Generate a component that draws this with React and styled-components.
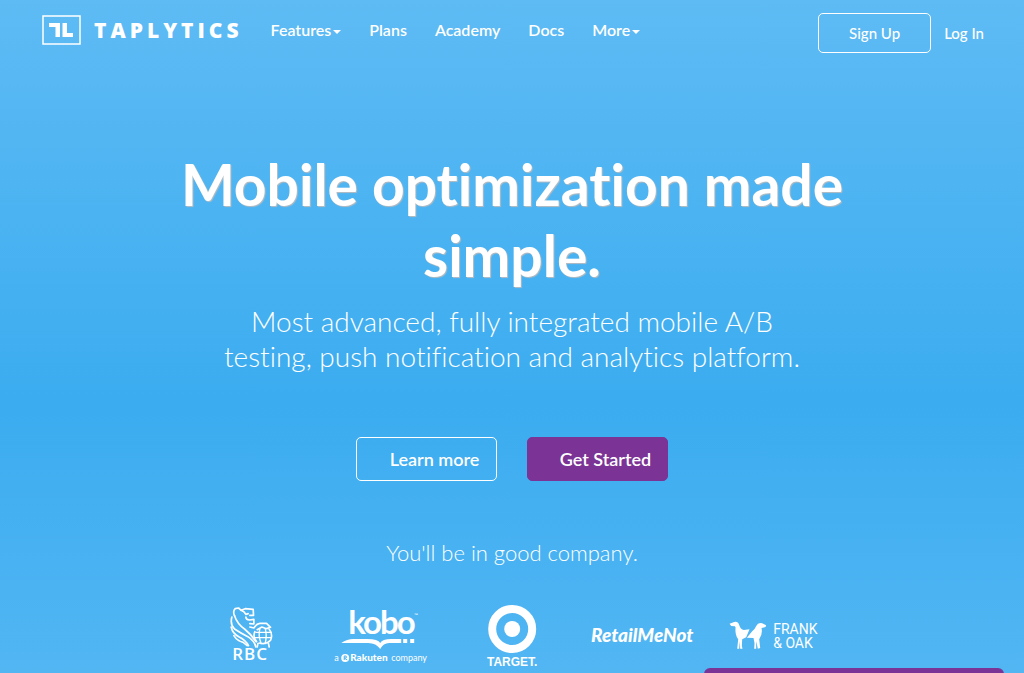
import React from "react";
import styled, { createGlobalStyle } from "styled-components";

const GlobalStyle = createGlobalStyle`
  * { box-sizing: border-box; }
  body {
    margin: 0;
    color: #fff;
    font-family: Lato, "Open Sans", sans-serif;
    font-variant-ligatures: none;
    overflow-x: hidden;
  }
`;

const Page = styled.div`
  min-height: 100vh;
  background: linear-gradient(#5ebbf4 0%, #3bacf0 60%, #52b6f3 100%);
`;

const Header = styled.header`
  display: flex;
  align-items: center;
  height: 60px;
  padding: 0 40px 0 42px;
`;

const Brand = styled.a`
  display: flex;
  align-items: center;
  gap: 13px;
  margin-right: 28px;
  color: #fff;
  text-decoration: none;
`;

const BrandMark = styled.svg`
  width: 39px;
  height: 30px;
`;

const BrandName = styled.span`
  font-family: "Open Sans", sans-serif;
  font-size: 21px;
  font-weight: 800;
  line-height: 30px;
  letter-spacing: 4px;
`;

const Nav = styled.nav`
  display: flex;
  gap: 28px;
`;

const NavLink = styled.a`
  display: flex;
  align-items: center;
  gap: 2px;
  color: #fff;
  font-size: 16px;
  font-weight: 600;
  line-height: 20px;
  text-decoration: none;
`;

const Caret = styled.span`
  margin-top: 4px;
  border: 4px solid transparent;
  border-top-color: #fff;
  border-bottom: 0;
`;

const Account = styled.div`
  display: flex;
  align-items: center;
  gap: 13px;
  margin-left: auto;
  padding-top: 6px;
`;

const SignUp = styled.button`
  width: 113px;
  height: 40px;
  padding: 0;
  border: 1px solid #fff;
  border-radius: 5px;
  background: transparent;
  color: #fff;
  font: 500 15px/20px Lato, sans-serif;
`;

const LogIn = styled.a`
  color: #fff;
  font-size: 15px;
  font-weight: 500;
  line-height: 20px;
  text-decoration: none;
`;

const Hero = styled.main`
  display: flex;
  flex-direction: column;
  align-items: center;
  padding: 89px 20px 0;
  text-align: center;
`;

const Title = styled.h1`
  max-width: 720px;
  margin: 0;
  font-size: 57px;
  font-weight: 700;
  line-height: 71px;
  text-shadow: 1px 1px 1px #b8bcc0;
`;

const Lead = styled.p`
  max-width: 600px;
  margin: 13px 0 0;
  font-size: 28px;
  font-weight: 300;
  line-height: 35px;
`;

const Actions = styled.div`
  display: flex;
  gap: 30px;
  margin-top: 63px;
`;

const ActionButton = styled.button`
  width: 141px;
  height: 44px;
  padding: 0 0 0 16px;
  border: 1px solid ${(p) => (p.$primary ? "#7b3495" : "#fff")};
  border-radius: 5px;
  background: ${(p) => (p.$primary ? "#7b3495" : "transparent")};
  color: #fff;
  font: 600 18px/24px Lato, sans-serif;
`;

const Company = styled.p`
  margin: 57px 0 0;
  font-size: 22px;
  font-weight: 300;
  line-height: 30px;
`;

const Logos = styled.div`
  display: grid;
  grid-template-columns: repeat(5, 1fr);
  width: 100%;
  max-width: 652px;
  margin-top: 37px;
`;

const Logo = styled.svg`
  display: block;
  width: 100%;
  height: 66px;
  fill: #fff;
  overflow: visible;
`;

const ChatTab = styled.button`
  position: fixed;
  right: 20px;
  bottom: -35px;
  width: 300px;
  height: 40px;
  border: 0;
  border-radius: 6px 6px 0 0;
  background: #7b3495;
`;

const links = [
  { label: "Features", menu: true },
  { label: "Plans" },
  { label: "Academy" },
  { label: "Docs" },
  { label: "More", menu: true },
];

function RbcLogo() {
  return (
    <Logo viewBox="0 0 130 66" role="img" aria-label="RBC">
      <g
        transform="translate(29 -10) scale(.3333)"
        fill="none"
        stroke="#fff"
        strokeWidth="5"
        strokeLinejoin="round"
        strokeLinecap="round"
      >
        <path d="M58 62 Q52 50 60 41 L70 39 L78 46 L90 41 L114 43 L115 61 L104 61" />
        <path d="M78 46 Q88 50 92 58 L99 56 M92 66 Q92 74 103 75 L116 73 L116 87 L104 86" />
        <path d="M50 66 Q44 88 58 102 Q76 114 98 125 Q118 138 122 156" />
        <path d="M58 62 Q66 86 88 102 Q108 118 122 140" />
        <path d="M48 96 Q52 116 72 126 Q92 136 100 152" />
        <path d="M56 122 Q66 138 84 142 L96 152" />
        <path d="M104 96 L116 99 Q124 86 134 85 L154 85 L166 97 L154 101 L140 96 L126 104" />
        <path d="M119 110 Q112 126 124 140 M162 103 Q174 118 166 136 Q154 150 132 144 M128 146 L126 156 M160 146 L162 156" />
        <path d="M134 102 Q128 120 138 146 M150 101 Q156 120 150 146 M122 112 H168 M120 128 H168" strokeWidth="4" />
      </g>
      <text x="46" y="55" fontFamily="Open Sans" fontSize="17" fontWeight="600" letterSpacing="1">RBC</text>
    </Logo>
  );
}

function KoboLogo() {
  return (
    <Logo viewBox="0 0 130 66" role="img" aria-label="Kobo, a Rakuten company">
      <text x="32" y="29" fontFamily="Lato" fontSize="33" fontWeight="700" letterSpacing="-2">kobo</text>
      <text x="98" y="12" fontFamily="Lato" fontSize="5">™</text>
      <path d="M25 38 Q31 34 37 34 H51 Q62 34 64 38 Q66 34 75 34 H85 V38 H73 Q67 38 64 44 Q60 38 52 38 Z M87 34 H91 V38 H87 Z M94 34 H98 V38 H94 Z" />
      <text x="18" y="56" fontFamily="Lato" fontSize="9">a</text>
      <circle cx="29" cy="53" r="4" />
      <path d="M28 55 V51 H30 V53 H28 L31 55" fill="none" stroke="#4fb5f2" />
      <text x="34" y="56" fontFamily="Lato" fontSize="10" fontWeight="900">Rakuten</text>
      <text x="75" y="56" fontFamily="Lato" fontSize="9">company</text>
    </Logo>
  );
}

function TargetLogo() {
  return (
    <Logo viewBox="0 0 130 66" role="img" aria-label="Target">
      <circle cx="65" cy="24" r="20" fill="none" stroke="#fff" strokeWidth="8" />
      <circle cx="65" cy="24" r="8" />
      <text x="65" y="61" textAnchor="middle" fontFamily="Liberation Sans" fontSize="12" fontWeight="700">TARGET.</text>
    </Logo>
  );
}

function RetailMeNotLogo() {
  return (
    <Logo viewBox="0 0 130 66" role="img" aria-label="RetailMeNot">
      <text x="65" y="37" textAnchor="middle" fontFamily="Lato" fontSize="19" fontWeight="900" fontStyle="italic">RetailMeNot</text>
    </Logo>
  );
}

function FrankOakLogo() {
  return (
    <Logo viewBox="0 0 130 66" role="img" aria-label="Frank & Oak">
      <g transform="translate(-8 -5) scale(.3333)">
        <path d="M88 71 L102 66 Q113 63 117 75 Q121 88 131 90 L148 88 L138 112 L126 118 L125 138 L127 146 L120 146 L119 124 L117 146 L111 146 L114 118 Q104 106 106 82 L104 79 L93 78 Z" />
        <path d="M198 76 L186 70 Q174 66 168 78 Q164 88 156 94 L140 113 L160 114 L163 130 L162 146 L168 146 L168 124 L173 146 L180 144 L177 118 Q188 102 184 84 L196 81 Z" />
      </g>
      <text x="65" y="29" fontFamily="Roboto" fontSize="14">FRANK</text>
      <text x="65" y="43" fontFamily="Roboto" fontSize="14">&amp; OAK</text>
    </Logo>
  );
}

export default function App() {
  return (
    <Page>
      <GlobalStyle />
      <Header>
        <Brand href="#">
          <BrandMark viewBox="0 0 39 30" aria-hidden="true">
            <rect x="1" y="1" width="37" height="28" fill="none" stroke="#fff" strokeWidth="1.5" />
            <path d="M7 8 H18 V22 H13.5 V12 H7 Z M20.5 8 H25 V18 H31 V22 H20.5 Z" fill="#fff" />
          </BrandMark>
          <BrandName>TAPLYTICS</BrandName>
        </Brand>
        <Nav>
          {links.map((l) => (
            <NavLink href="#" key={l.label}>
              {l.label}
              {l.menu && <Caret />}
            </NavLink>
          ))}
        </Nav>
        <Account>
          <SignUp>Sign Up</SignUp>
          <LogIn href="#">Log In</LogIn>
        </Account>
      </Header>
      <Hero>
        <Title>Mobile optimization made simple.</Title>
        <Lead>Most advanced, fully integrated mobile A/B testing, push notification and analytics platform.</Lead>
        <Actions>
          <ActionButton>Learn more</ActionButton>
          <ActionButton $primary>Get Started</ActionButton>
        </Actions>
        <Company>You'll be in good company.</Company>
        <Logos>
          <RbcLogo />
          <KoboLogo />
          <TargetLogo />
          <RetailMeNotLogo />
          <FrankOakLogo />
        </Logos>
      </Hero>
      <ChatTab aria-label="Open chat" />
    </Page>
  );
}
